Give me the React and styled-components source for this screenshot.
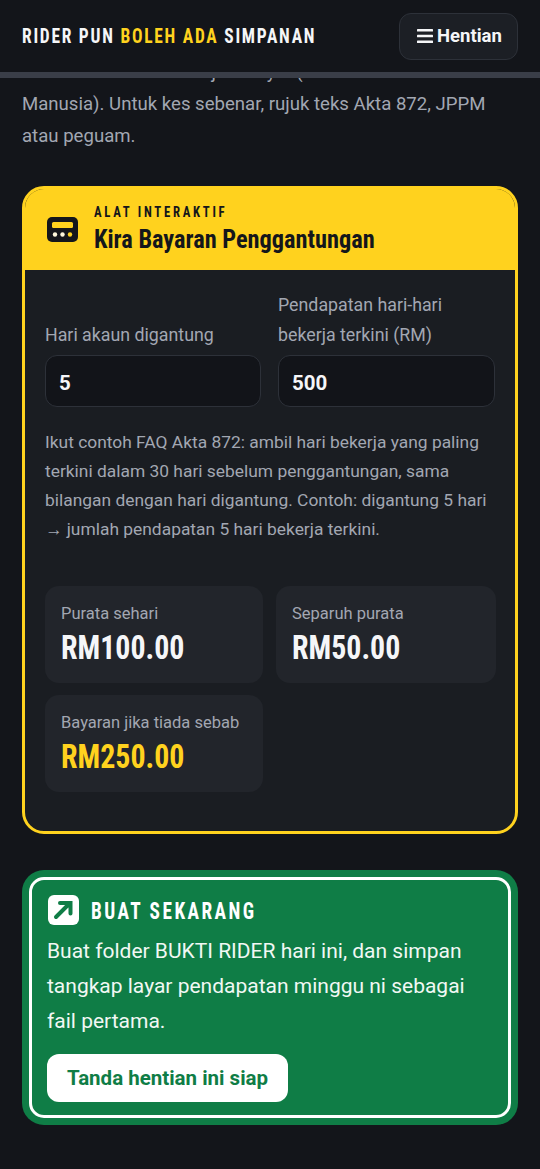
import React from 'react';
import styled, { createGlobalStyle } from 'styled-components';

const condensed = `"Roboto", "Liberation Sans", sans-serif`;

const GlobalStyle = createGlobalStyle`
  html, body {
    margin: 0;
    padding: 0;
    height: 1169px;
    overflow: hidden;
    background: #13151a;
    font-family: "Roboto", "Liberation Sans", sans-serif;
  }
  * { box-sizing: border-box; }
`;

const Header = styled.header`
  position: sticky;
  top: 0;
  z-index: 5;
  display: flex;
  align-items: center;
  justify-content: space-between;
  height: 78px;
  padding: 0 22px;
  background: #13151a;
  border-bottom: 6px solid #3a3e48;
`;
const Brand = styled.div`
  font-family: ${condensed};
  font-stretch: 75%;
  font-weight: 700;
  font-size: 21px;
  letter-spacing: 2.1px;
  color: #f5f6f8;
  white-space: nowrap;
  transform: scaleX(0.83);
  transform-origin: left center;
`;
const Accent = styled.span`
  color: #ffd21e;
`;
const MenuButton = styled.button`
  display: flex;
  align-items: center;
  gap: 4px;
  flex-shrink: 0;
  width: 119px;
  height: 47px;
  padding: 0 0 0 17px;
  border: 1px solid #2d3139;
  border-radius: 12px;
  background: #1c1f25;
  color: #f5f6f8;
  font: 700 18.5px "Roboto", sans-serif;
`;
const Main = styled.main`
  padding: 0 22px;
`;
const Intro = styled.p`
  margin: -22px 0 0;
  font-size: 18.6px;
  line-height: 32px;
  color: #a2a7b2;
`;
const Calculator = styled.section`
  margin-top: 34px;
  border: 3px solid #ffd21e;
  border-radius: 22px;
  background: #1a1d22;
  overflow: hidden;
`;
const CalcHeader = styled.div`
  display: flex;
  align-items: center;
  gap: 16px;
  height: 81px;
  padding-left: 22px;
  background: #ffd21e;
  color: #14161b;
`;
const CalcHeading = styled.div`
  margin-bottom: 1px;
`;
const Eyebrow = styled.div`
  font-family: ${condensed};
  font-stretch: 75%;
  font-weight: 700;
  font-size: 15px;
  letter-spacing: 3.2px;
  line-height: 16px;
  white-space: nowrap;
  transform: scaleX(0.85);
  transform-origin: left center;
`;
const CalcTitle = styled.h2`
  margin: 5px 0 0;
  font-family: ${condensed};
  font-stretch: 75%;
  font-weight: 700;
  font-size: 25.5px;
  line-height: 29px;
  white-space: nowrap;
  transform: scaleX(0.955);
  transform-origin: left center;
`;
const CalcBody = styled.div`
  padding: 20px 20px 39px;
`;
const Fields = styled.div`
  display: grid;
  grid-template-columns: 216px 217px;
  gap: 17px;
  align-items: end;
`;
const Field = styled.label`
  display: block;
  font-size: 17.8px;
  line-height: 30px;
  color: #a2a7b2;
`;
const Input = styled.input`
  display: block;
  width: 100%;
  height: 52px;
  margin-top: 5px;
  padding: 3px 13px 0;
  border: 1px solid #2d3139;
  border-radius: 12px;
  background: #121419;
  color: #f5f6f8;
  font: 700 20.5px "Roboto", sans-serif;
  outline: none;
`;
const Help = styled.p`
  margin: 21px 0 0;
  font-size: 17.4px;
  line-height: 29px;
  color: #a2a7b2;
`;
const Results = styled.div`
  display: grid;
  grid-template-columns: 218px 220px;
  gap: 12px 13px;
  margin-top: 42px;
`;
const Result = styled.div`
  height: 97px;
  padding: 17px 16px 0;
  border-radius: 14px;
  background: #22252b;
`;
const ResultLabel = styled.div`
  font-size: 16.5px;
  line-height: 22px;
  color: #a2a7b2;
`;
const ResultValue = styled.div`
  margin-top: 4px;
  font-family: ${condensed};
  font-stretch: 75%;
  font-weight: 700;
  font-size: 32.5px;
  line-height: 38px;
  color: ${props => props.$accent ? '#ffd21e' : '#f5f6f8'};
  transform: scaleX(0.92);
  transform-origin: left center;
`;
const ActionCard = styled.section`
  margin-top: 36px;
  padding: 7px;
  border-radius: 22px;
  background: #0f7d46;
`;
const ActionInner = styled.div`
  height: 241px;
  padding: 14px 15px 0;
  border: 3px solid #ffffff;
  border-radius: 15px;
`;
const ActionHead = styled.div`
  display: flex;
  align-items: center;
  gap: 12px;
  height: 31px;
  margin-left: 1px;
`;
const ActionTitle = styled.h3`
  margin: 3px 0 0;
  font-family: ${condensed};
  font-stretch: 75%;
  font-weight: 700;
  font-size: 23.5px;
  letter-spacing: 3px;
  color: #ffffff;
  white-space: nowrap;
  transform: scaleX(0.82);
  transform-origin: left center;
`;
const ActionText = styled.p`
  margin: 9px 0 0;
  font-size: 21px;
  line-height: 35px;
  color: #f1f8f4;
`;
const ActionButton = styled.button`
  display: block;
  width: 241px;
  height: 48px;
  margin-top: 15px;
  border: none;
  border-radius: 12px;
  background: #ffffff;
  color: #0f7d46;
  font: 700 20.5px "Roboto", sans-serif;
`;

const BarsIcon = () => (
  <svg width="16" height="16" viewBox="0 0 16 16" fill="#f5f6f8">
    <rect x="0" y="1" width="16" height="2.6" rx="0.6" />
    <rect x="0" y="6.7" width="16" height="2.6" rx="0.6" />
    <rect x="0" y="12.4" width="16" height="2.6" rx="0.6" />
  </svg>
);

const CalcIcon = () => (
  <svg width="31" height="25" viewBox="0 0 31 25">
    <rect x="0" y="0" width="31" height="25" rx="5" fill="#14161b" />
    <rect x="5" y="5" width="21" height="6" rx="1.5" fill="#ffd21e" />
    <circle cx="8" cy="17.5" r="2.2" fill="#fff8dc" />
    <circle cx="15.5" cy="17.5" r="2.2" fill="#fff8dc" />
    <circle cx="23" cy="17.5" r="2.2" fill="#ffd21e" />
  </svg>
);

const ArrowIcon = () => (
  <svg width="31" height="30" viewBox="0 0 31 30">
    <rect x="0" y="0" width="31" height="30" rx="6" fill="#ffffff" />
    <path d="M8 22 L21 9 M12 8 H22.5 V18.5" fill="none" stroke="#0f7d46" strokeWidth="4" strokeLinecap="round" strokeLinejoin="miter" />
  </svg>
);

export default function App() {
  return (
    <>
      <GlobalStyle />
      <Header>
        <Brand>RIDER PUN <Accent>BOLEH ADA</Accent> SIMPANAN</Brand>
        <MenuButton><BarsIcon />Hentian</MenuButton>
      </Header>
      <Main>
        <Intro>
          Nota ini untuk rakan sejati rakyat (Kementerian Sumber Manusia). Untuk kes sebenar, rujuk teks Akta 872, JPPM atau peguam.
        </Intro>
        <Calculator>
          <CalcHeader>
            <CalcIcon />
            <CalcHeading>
              <Eyebrow>ALAT INTERAKTIF</Eyebrow>
              <CalcTitle>Kira Bayaran Penggantungan</CalcTitle>
            </CalcHeading>
          </CalcHeader>
          <CalcBody>
            <Fields>
              <Field>
                Hari akaun digantung
                <Input defaultValue="5" />
              </Field>
              <Field>
                Pendapatan hari-hari bekerja terkini (RM)
                <Input defaultValue="500" />
              </Field>
            </Fields>
            <Help>
              Ikut contoh FAQ Akta 872: ambil hari bekerja yang paling terkini dalam 30 hari sebelum penggantungan, sama bilangan dengan hari digantung. Contoh: digantung 5 hari → jumlah pendapatan 5 hari bekerja terkini.
            </Help>
            <Results>
              <Result>
                <ResultLabel>Purata sehari</ResultLabel>
                <ResultValue>RM100.00</ResultValue>
              </Result>
              <Result>
                <ResultLabel>Separuh purata</ResultLabel>
                <ResultValue>RM50.00</ResultValue>
              </Result>
              <Result>
                <ResultLabel>Bayaran jika tiada sebab</ResultLabel>
                <ResultValue $accent>RM250.00</ResultValue>
              </Result>
            </Results>
          </CalcBody>
        </Calculator>
        <ActionCard>
          <ActionInner>
            <ActionHead>
              <ArrowIcon />
              <ActionTitle>BUAT SEKARANG</ActionTitle>
            </ActionHead>
            <ActionText>
              Buat folder BUKTI RIDER hari ini, dan simpan tangkap layar pendapatan minggu ni sebagai fail pertama.
            </ActionText>
            <ActionButton>Tanda hentian ini siap</ActionButton>
          </ActionInner>
        </ActionCard>
      </Main>
    </>
  );
}
